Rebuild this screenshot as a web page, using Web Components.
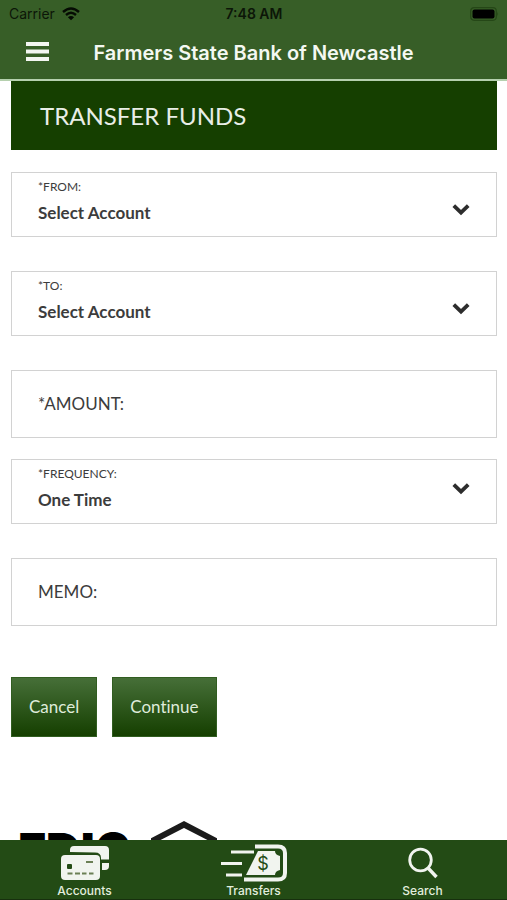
<!DOCTYPE html>
<html lang="en">
<head>
<meta charset="utf-8">
<meta name="viewport" content="width=device-width, initial-scale=1">
<title>Transfer Funds</title>
<style>
html, body { margin: 0; height: 100%; }
body { font-family: Lato, "Liberation Sans", sans-serif; font-variant-ligatures: none; color: #3c3c3c; background: #fff; }
</style>
</head>
<body>
<bank-app>
  <status-bar slot="top" carrier="Carrier" time="7:48 AM"></status-bar>
  <nav-header slot="top">Farmers State Bank of Newcastle</nav-header>
  <page-title>Transfer Funds</page-title>
  <transfer-form></transfer-form>
  <footer-logos></footer-logos>
  <tab-bar slot="bottom">
    <tab-item icon="accounts" href="#accounts">Accounts</tab-item>
    <tab-item icon="transfers" href="#transfers">Transfers</tab-item>
    <tab-item icon="search" href="#search">Search</tab-item>
  </tab-bar>
</bank-app>
<script>
const define = (name, render) => customElements.define(name, class extends HTMLElement {
  constructor() {
    super();
    this.attachShadow({ mode: 'open' });
  }
  connectedCallback() {
    this.shadowRoot.innerHTML = render(this);
  }
});

define('bank-app', () => `
<style>
:host { display: flex; flex-direction: column; height: 100vh; }
header { background: #375e27; border-bottom: 2px solid #b5d0ae; }
main { flex: 1; min-height: 0; overflow: hidden; padding: 0 10px 0 11px; }
</style>
<header><slot name="top"></slot></header>
<main><slot></slot></main>
<slot name="bottom"></slot>`);

define('status-bar', el => `
<style>
:host { display: grid; grid-template-columns: 1fr auto 1fr; align-items: center; height: 27px; padding: 0 8px 0 9px;
  font: 14px/26px Inter, sans-serif; color: #0c1608; }
.carrier { display: flex; align-items: center; gap: 7px; }
.time { font-weight: 600; }
.battery { justify-self: end; }
svg { display: block; }
</style>
<span class="carrier">${el.getAttribute('carrier')}
  <svg width="18" height="14" viewBox="0 0 18 14" aria-hidden="true">
    <g fill="none" stroke="#050b03" stroke-width="2.4"><path d="M1 5Q9 -2 17 5"/><path d="M4 8Q9 3.6 14 8"/></g>
    <path d="M9 13.3L5.9 10.2Q9 7.7 12.1 10.2Z" fill="#050b03"/>
  </svg></span>
<span class="time">${el.getAttribute('time')}</span>
<svg class="battery" width="29" height="14" viewBox="0 0 29 14" aria-hidden="true">
  <rect x=".7" y=".7" width="25.6" height="12.6" rx="3.5" fill="none" stroke="#254717" stroke-width="1.2"/>
  <rect x="2.5" y="2.5" width="22" height="9" rx="2" fill="#000"/>
  <path d="M27.3 4.5q1.5 2.5 0 5z" fill="#254717"/>
</svg>`);

define('nav-header', () => `
<style>
:host { display: grid; grid-template-columns: 57px 1fr 57px; align-items: center; height: 52px; padding: 0 9px; }
button { justify-self: center; margin: 0 0 4px; padding: 8px; border: 0; background: none; }
svg { display: block; }
h1 { margin: 0; text-align: center; white-space: nowrap; font: 600 20px/50px Inter, sans-serif; color: #f4f8f2; }
</style>
<button aria-label="Menu"><svg width="23" height="19" viewBox="0 0 23 19"><path d="M0 2h23M0 9.5h23M0 17h23" stroke="#f3f6f1" stroke-width="4"/></svg></button>
<h1><slot></slot></h1>`);

define('page-title', () => `
<style>
:host { display: block; background: #153f00; padding: 0 29px; }
h2 { margin: 0; font: 400 24px/69px Lato, sans-serif; color: #e9eee7; text-transform: uppercase; }
</style>
<h2><slot></slot></h2>`);

define('select-field', el => `
<style>
:host { display: block; }
.box { display: grid; border: 1px solid #d2d2d2; box-sizing: border-box; height: 65px; background: #fff; }
.box > * { grid-area: 1 / 1; }
label { padding: 5px 26px; font-size: 12px; line-height: 17px; justify-self: start; align-self: start; z-index: 1; }
select { appearance: none; width: 100%; height: 100%; margin: 0; border: 0; background: none; padding: 17px 60px 0 26px;
  font: 700 17px/24px Lato, sans-serif; color: #3c3c3c; }
svg { justify-self: end; align-self: start; margin: 30px 26px 0 0; pointer-events: none; }
:host([compact]) svg { margin-top: 22px; }
</style>
<div class="box">
  <label for="choice">${el.getAttribute('label')}</label>
  <select id="choice"><option>${el.getAttribute('value')}</option></select>
  <svg width="18" height="13" viewBox="0 0 18 13" aria-hidden="true"><path d="M1.800 2.600L9 9.600L16.200 2.600" fill="none" stroke="#2d2d2d" stroke-width="3.800"/></svg>
</div>`);

define('text-field', el => `
<style>
:host { display: block; }
label { display: flex; align-items: center; border: 1px solid #d2d2d2; box-sizing: border-box; height: 68px; padding: 0 26px; gap: 8px; font-size: 17px; line-height: 24px; background: #fff; }
input { flex: 1; min-width: 0; border: 0; outline: 0; padding: 0; background: none; font: inherit; color: inherit; }
</style>
<label>${el.getAttribute('label')}<input type="text"></label>`);

define('action-button', () => `
<style>
:host { display: inline-block; }
button { height: 60px; margin: 0; padding: 0 17px; border: 1px solid #315d20; background: linear-gradient(#466f38, #153f00);
  font: 17px/24px Lato, sans-serif; font-variant-ligatures: none; color: #dfebda; }
</style>
<button type="button"><slot></slot></button>`);

define('transfer-form', () => `
<style>
form { display: flex; flex-direction: column; gap: 34px; padding-top: 22px; }
.pair { display: flex; flex-direction: column; gap: 21px; }
.actions { display: flex; gap: 15px; padding-top: 17px; }
</style>
<form>
  <select-field label="*FROM:" value="Select Account"></select-field>
  <select-field label="*TO:" value="Select Account"></select-field>
  <div class="pair">
    <text-field label="*AMOUNT:"></text-field>
    <select-field compact label="*FREQUENCY:" value="One Time"></select-field>
  </div>
  <text-field label="MEMO:"></text-field>
  <div class="actions">
    <action-button>Cancel</action-button>
    <action-button>Continue</action-button>
  </div>
</form>`);

define('footer-logos', () => `
<style>
:host { display: flex; align-items: flex-start; gap: 20px; padding: 84px 7px 0; }
.fdic { padding-top: 6px; font: 900 48px/48px Inter, sans-serif; color: #000; }
</style>
<span class="fdic">FDIC</span>
<svg width="66" height="60" viewBox="0 0 66 60" role="img" aria-label="Equal Housing Lender">
  <path d="M33 3.500L3 19V28H8V54H58V28H63V19Z" fill="none" stroke="#1b1b1b" stroke-width="6"/>
  <path d="M21 30H45M21 40H45" stroke="#1b1b1b" stroke-width="6"/>
</svg>`);

define('tab-bar', () => `
<style>
:host { display: block; background: #234b15; border-bottom: 1px solid #17300e; }
nav { display: grid; grid-template-columns: repeat(3, 1fr); }
</style>
<nav><slot></slot></nav>`);

const icons = {
  accounts: `<svg width="50" height="36" viewBox="0 0 50 36" aria-hidden="true">
    <path d="M10 7V5Q10 1 14 1H45Q49 1 49 5V14.5H41V13Q41 7.500 35 7.500Z" fill="#f1f4ef"/>
    <path d="M42 18H49V21Q49 25 45 25H42Z" fill="#f1f4ef"/>
    <rect x="1" y="10" width="39" height="25" rx="4" fill="#f1f4ef"/>
    <rect x="7" y="19" width="5" height="5" rx="1" fill="#234b15"/>
    <path d="M26 17H33M7.500 28.500H12.500M15 28.500H20M22 28.500H26.500M29 28.500H33.500" stroke="#6b7f55" stroke-width="2"/></svg>`,
  transfers: `<svg width="68" height="38" viewBox="0 0 68 38" aria-hidden="true">
    <path d="M11 8H34M1 19.500H22M6 31H22" stroke="#f1f4ef" stroke-width="3" fill="none"/>
    <path d="M35 2.500H58Q65 2.500 65 9V29Q65 35.500 58 35.500H24" stroke="#f1f4ef" stroke-width="4" fill="none"/>
    <path d="M38 7H55Q55 11 60 12V26Q55 27 55 31H26Z" fill="#f1f4ef"/>
    <text x="43" y="26" text-anchor="middle" font-family="Inter, sans-serif" font-size="18" font-weight="400" fill="#234b15">$</text></svg>`,
  search: `<svg width="30" height="32" viewBox="0 0 30 32" aria-hidden="true">
    <circle cx="12.500" cy="13" r="10.800" fill="none" stroke="#f1f4ef" stroke-width="2.800"/>
    <path d="M20 21L28.500 30" stroke="#f1f4ef" stroke-width="3.400"/></svg>`
};

define('tab-item', el => `
<style>
:host { display: block; }
a { display: flex; flex-direction: column; align-items: center; padding-top: 3px; text-decoration: none; color: #e2eedd; font: 500 12px/16px Inter, sans-serif; }
.icon { height: 40px; display: flex; align-items: center; justify-content: center; }
</style>
<a href="${el.getAttribute('href')}"><span class="icon">${icons[el.getAttribute('icon')]}</span><span><slot></slot></span></a>`);
</script>
</body>
</html>
